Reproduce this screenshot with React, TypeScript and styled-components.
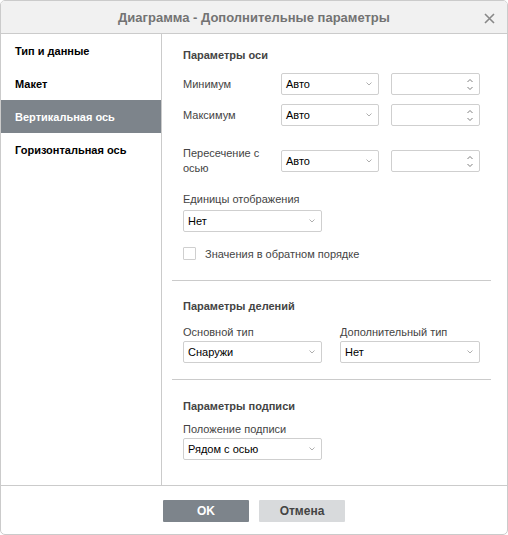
import styled, { createGlobalStyle } from "styled-components";

const GlobalStyle = createGlobalStyle`
    html, body {
        margin: 0;
        padding: 0;
        background: #ffffff;
    }
    * {
        box-sizing: border-box;
    }
`;

const Dialog = styled.div`
    display: flex;
    flex-direction: column;
    width: 508px;
    height: 535px;
    border: 1px solid #cbcbcb;
    border-radius: 5px;
    overflow: hidden;
    background: #ffffff;
    font-family: "Liberation Sans", Arial, sans-serif;
    font-size: 11px;
    color: #444444;
`;

const Header = styled.div`
    position: relative;
    display: flex;
    align-items: center;
    justify-content: center;
    height: 33px;
    flex-shrink: 0;
    background: #f1f1f1;
    border-bottom: 1px solid #cbcbcb;
    font-size: 13px;
    font-weight: 700;
    color: #737373;
`;

const Close = styled.div`
    position: absolute;
    right: 12px;
    top: 11px;
    width: 11px;
    height: 11px;
`;

const Body = styled.div`
    display: flex;
    flex: 1;
    min-height: 0;
`;

const Sidebar = styled.div`
    display: flex;
    flex-direction: column;
    width: 161px;
    flex-shrink: 0;
    border-right: 1px solid #cbcbcb;
`;

const NavItem = styled.div<{ active?: boolean }>`
    display: flex;
    align-items: center;
    height: 33px;
    padding-left: 14px;
    font-weight: 700;
    color: ${(p) => (p.active ? "#ffffff" : "#000000")};
    background: ${(p) => (p.active ? "#7d848b" : "transparent")};
`;

const Panel = styled.div`
    flex: 1;
    padding: 13px 16px 0 10px;
`;

const Section = styled.div`
    padding-left: 11px;
`;

const SectionTitle = styled.div<{ mt?: number }>`
    font-weight: 700;
    line-height: 16px;
    margin-top: ${(p) => p.mt ?? 0}px;
    color: #444444;
`;

const Row = styled.div<{ mt: number }>`
    display: flex;
    align-items: center;
    margin-top: ${(p) => p.mt}px;
`;

const RowLabel = styled.div`
    width: 98px;
    line-height: 15px;
`;

const FieldLabel = styled.div<{ mt: number }>`
    line-height: 15px;
    margin-top: ${(p) => p.mt}px;
`;

const ComboBox = styled.div<{ w: number; mt?: number }>`
    display: flex;
    align-items: center;
    justify-content: space-between;
    width: ${(p) => p.w}px;
    height: 22px;
    margin-top: ${(p) => p.mt ?? 0}px;
    padding: 0 6px 0 4px;
    border: 1px solid #cfcfcf;
    border-radius: 2px;
    color: #000000;
    background: #ffffff;
`;

const Spinner = styled.div`
    display: flex;
    flex-direction: column;
    align-items: flex-end;
    justify-content: center;
    gap: 5px;
    width: 89px;
    height: 22px;
    margin-left: 12px;
    padding-right: 6px;
    border: 1px solid #cfcfcf;
    border-radius: 2px;
`;

const CheckRow = styled.div`
    display: flex;
    align-items: center;
    margin-top: 15px;
`;

const CheckBox = styled.div`
    width: 13px;
    height: 13px;
    border: 1px solid #cfcfcf;
    border-radius: 1px;
    margin-right: 9px;
`;

const Separator = styled.div<{ mt: number }>`
    height: 1px;
    background: #cbcbcb;
    margin-top: ${(p) => p.mt}px;
`;

const Columns = styled.div`
    display: flex;
    gap: 18px;
    margin-top: 11px;
`;

const Column = styled.div`
    display: flex;
    flex-direction: column;
`;

const Footer = styled.div`
    display: flex;
    justify-content: center;
    gap: 10px;
    height: 49px;
    flex-shrink: 0;
    padding-top: 14px;
    border-top: 1px solid #cbcbcb;
`;

const Button = styled.div<{ primary?: boolean }>`
    display: flex;
    align-items: center;
    justify-content: center;
    width: 86px;
    height: 22px;
    border-radius: 1px;
    font-size: 12px;
    font-weight: 700;
    color: ${(p) => (p.primary ? "#ffffff" : "#444444")};
    background: ${(p) => (p.primary ? "#7d848b" : "#d8dadc")};
`;

function Chevron({ up }: { up?: boolean }) {
    return (
        <svg width="6" height="3" viewBox="0 0 6 3">
            <path
                d={up ? "M0.5 3 L3 0.5 L5.5 3" : "M0.5 0 L3 2.5 L5.5 0"}
                fill="none"
                stroke="#6f6f6f"
                strokeWidth="0.9"
            />
        </svg>
    );
}

function Combo({ value, w, mt }: { value: string; w: number; mt?: number }) {
    return (
        <ComboBox w={w} mt={mt}>
            <span>{value}</span>
            <svg width="6" height="4" viewBox="0 0 6 4">
                <path d="M0.5 0.5 L3 3 L5.5 0.5" fill="none" stroke="#9a9a9a" strokeWidth="0.8" />
            </svg>
        </ComboBox>
    );
}

function SpinBox() {
    return (
        <Spinner>
            <Chevron up />
            <Chevron />
        </Spinner>
    );
}

export default function App() {
    return (
        <>
            <GlobalStyle />
            <Dialog>
                <Header>
                    Диаграмма - Дополнительные параметры
                    <Close>
                        <svg width="11" height="11" viewBox="0 0 11 11">
                            <path d="M1 1 L10 10 M10 1 L1 10" stroke="#888888" strokeWidth="1.6" />
                        </svg>
                    </Close>
                </Header>
                <Body>
                    <Sidebar>
                        <NavItem>Тип и данные</NavItem>
                        <NavItem>Макет</NavItem>
                        <NavItem active>Вертикальная ось</NavItem>
                        <NavItem>Горизонтальная ось</NavItem>
                    </Sidebar>
                    <Panel>
                        <Section>
                            <SectionTitle>Параметры оси</SectionTitle>
                            <Row mt={10}>
                                <RowLabel>Минимум</RowLabel>
                                <Combo value="Авто" w={98} />
                                <SpinBox />
                            </Row>
                            <Row mt={9}>
                                <RowLabel>Максимум</RowLabel>
                                <Combo value="Авто" w={98} />
                                <SpinBox />
                            </Row>
                            <Row mt={20}>
                                <RowLabel>
                                    Пересечение с
                                    <br />
                                    осью
                                </RowLabel>
                                <Combo value="Авто" w={98} />
                                <SpinBox />
                            </Row>
                            <FieldLabel mt={16}>Единицы отображения</FieldLabel>
                            <Combo value="Нет" w={139} mt={3} />
                            <CheckRow>
                                <CheckBox />
                                <span>Значения в обратном порядке</span>
                            </CheckRow>
                        </Section>
                        <Separator mt={20} />
                        <Section>
                            <SectionTitle mt={17}>Параметры делений</SectionTitle>
                            <Columns>
                                <Column>
                                    <FieldLabel mt={0}>Основной тип</FieldLabel>
                                    <Combo value="Снаружи" w={139} mt={1} />
                                </Column>
                                <Column>
                                    <FieldLabel mt={0}>Дополнительный тип</FieldLabel>
                                    <Combo value="Нет" w={140} mt={1} />
                                </Column>
                            </Columns>
                        </Section>
                        <Separator mt={16} />
                        <Section>
                            <SectionTitle mt={18}>Параметры подписи</SectionTitle>
                            <FieldLabel mt={8}>Положение подписи</FieldLabel>
                            <Combo value="Рядом с осью" w={139} mt={1} />
                        </Section>
                    </Panel>
                </Body>
                <Footer>
                    <Button primary>OK</Button>
                    <Button>Отмена</Button>
                </Footer>
            </Dialog>
        </>
    );
}
